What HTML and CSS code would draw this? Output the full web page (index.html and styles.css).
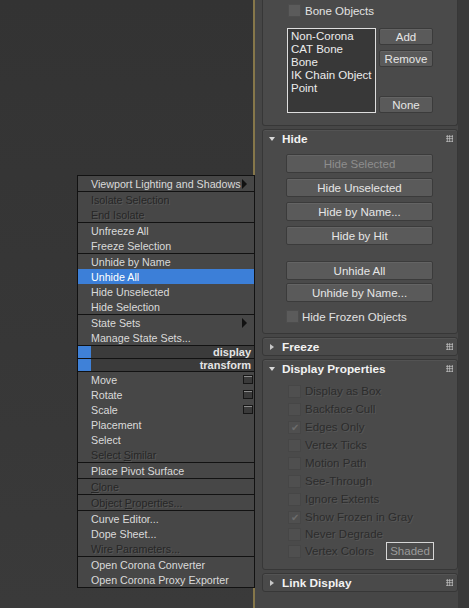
FILE: index.html
```html
<!DOCTYPE html>
<html lang="en">
<head>
  <meta charset="UTF-8">
  <title>Object Properties</title>
  <link rel="stylesheet" href="styles.css">
</head>
<body>
<div class="screen">
  <div class="viewport"></div>
  <div class="frame-line"></div>

  <div class="panel">
    <div class="rollouts">
      <!-- bone filter rollout, header is scrolled off the top -->
      <div class="rollout cut">
        <div class="check-row bone-row">
          <span class="box on"></span><span class="label">Bone Objects</span>
        </div>
        <div class="pick-area">
          <div class="listbox">
            <div>Non-Corona</div>
            <div>CAT Bone</div>
            <div>Bone</div>
            <div>IK Chain Object</div>
            <div>Point</div>
          </div>
          <div class="btn-col">
            <div class="btn small">Add</div>
            <div class="btn small gap5">Remove</div>
            <div class="btn small push">None</div>
          </div>
        </div>
      </div>

      <div class="rollout hide-roll">
        <div class="roll-head"><span class="tri down"></span><span class="title">Hide</span><span class="grip"></span></div>
        <div class="hide-body">
          <div class="btn wide disabled">Hide Selected</div>
          <div class="btn wide gap5">Hide Unselected</div>
          <div class="btn wide gap5">Hide by Name...</div>
          <div class="btn wide gap5">Hide by Hit</div>
          <div class="btn wide gap16">Unhide All</div>
          <div class="btn wide gap3">Unhide by Name...</div>
          <div class="check-row frozen-row">
            <span class="box on"></span><span class="label">Hide Frozen Objects</span>
          </div>
        </div>
      </div>

      <div class="rollout closed">
        <div class="roll-head"><span class="tri right"></span><span class="title">Freeze</span><span class="grip"></span></div>
      </div>

      <div class="rollout display-roll">
        <div class="roll-head"><span class="tri down"></span><span class="title">Display Properties</span><span class="grip"></span></div>
        <div class="display-body">
          <div class="check-row dim"><span class="box"></span><span class="label">Display as Box</span></div>
          <div class="check-row dim"><span class="box"></span><span class="label">Backface Cull</span></div>
          <div class="check-row dim"><span class="box ticked">&#10004;</span><span class="label">Edges Only</span></div>
          <div class="check-row dim"><span class="box"></span><span class="label">Vertex Ticks</span></div>
          <div class="check-row dim"><span class="box"></span><span class="label">Motion Path</span></div>
          <div class="check-row dim"><span class="box"></span><span class="label">See-Through</span></div>
          <div class="check-row dim"><span class="box"></span><span class="label">Ignore Extents</span></div>
          <div class="check-row dim"><span class="box ticked">&#10004;</span><span class="label">Show Frozen in Gray</span></div>
          <div class="check-row dim tight"><span class="box"></span><span class="label">Never Degrade</span></div>
          <div class="check-row dim"><span class="box"></span><span class="label">Vertex Colors</span><span class="shaded">Shaded</span></div>
        </div>
      </div>

      <div class="rollout closed">
        <div class="roll-head"><span class="tri right"></span><span class="title">Link Display</span><span class="grip"></span></div>
      </div>
    </div>
    <div class="scroll-strip"></div>
  </div>

  <!-- quad menu -->
  <div class="ctx-menu">
    <div class="group">
      <div class="item"><span class="sub"></span>Viewport Lighting and Shadows</div>
    </div>
    <div class="group">
      <div class="item off">Isolate Selection</div>
      <div class="item off">End Isolate</div>
    </div>
    <div class="group">
      <div class="item">Unfreeze All</div>
      <div class="item">Freeze Selection</div>
    </div>
    <div class="group">
      <div class="item">Unhide by Name</div>
      <div class="item active">Unhide All</div>
      <div class="item">Hide Unselected</div>
      <div class="item">Hide Selection</div>
    </div>
    <div class="group">
      <div class="item"><span class="sub"></span>State Sets</div>
      <div class="item">Manage State Sets...</div>
    </div>
    <div class="group quad-bar"><span class="quad-mark"></span><span class="quad-name">display</span></div>
    <div class="group quad-bar"><span class="quad-mark"></span><span class="quad-name">transform</span></div>
    <div class="group">
      <div class="item"><span class="opt"></span>Move</div>
      <div class="item"><span class="opt"></span>Rotate</div>
      <div class="item"><span class="opt"></span>Scale</div>
      <div class="item">Placement</div>
      <div class="item">Select</div>
      <div class="item off">Select <u>S</u>imilar</div>
    </div>
    <div class="group">
      <div class="item">Place Pivot Surface</div>
    </div>
    <div class="group">
      <div class="item off"><u>C</u>lone</div>
    </div>
    <div class="group">
      <div class="item off">Object <u>P</u>roperties...</div>
    </div>
    <div class="group">
      <div class="item">Curve Editor...</div>
      <div class="item">Dope Sheet...</div>
      <div class="item off">Wire Parameters...</div>
    </div>
    <div class="group">
      <div class="item">Open Corona Converter</div>
      <div class="item">Open Corona Proxy Exporter</div>
    </div>
  </div>
</div>
</body>
</html>
```

FILE: styles.css
```css
* {
  box-sizing: border-box;
}
body {
  margin: 0;
  background: #343434;
  font-family: "Liberation Sans", Arial, sans-serif;
  font-size: 11px;
  color: #e2e2e2;
}
.screen {
  position: relative;
  display: flex;
  width: 469px;
  height: 608px;
  overflow: hidden;
}
.viewport {
  width: 253px;
  background: linear-gradient(#333333, #3a3a3a);
}
.frame-line {
  width: 2px;
  background: #86774a;
}

/* command panel */
.panel {
  width: 214px;
  display: flex;
  background: #464646;
}
.rollouts {
  width: 196px;
  margin-left: 7px;
  display: flex;
  flex-direction: column;
  gap: 3px;
}
.rollout {
  background: #4a4a4a;
  border: 1px solid #373737;
  border-radius: 3px;
  box-shadow: inset 0 1px 0 #535353;
}
.rollout.cut {
  height: 126px;
  border-top: 0;
  border-radius: 0 0 3px 3px;
  box-shadow: none;
  padding: 4px 0 0 24px;
}
.hide-roll { height: 205px; }
.display-roll { height: 211px; }
.rollout.closed { height: 19px; }
.scroll-strip {
  width: 11px;
  background: #3a3a3a;
}

.roll-head {
  height: 18px;
  display: flex;
  align-items: center;
  padding-left: 6px;
}
.roll-head .title {
  font-weight: bold;
  font-size: 11.8px;
  color: #f2f2f2;
  margin-left: 7px;
}
.tri {
  width: 0;
  height: 0;
}
.tri.down {
  border-left: 3px solid transparent;
  border-right: 3px solid transparent;
  border-top: 4px solid #d8d8d8;
}
.tri.right {
  margin-left: 1px;
  margin-right: 1px;
  border-top: 3px solid transparent;
  border-bottom: 3px solid transparent;
  border-left: 4px solid #c8c8c8;
}
.grip {
  margin-left: auto;
  margin-right: 4px;
  align-self: flex-start;
  margin-top: 5px;
  width: 7px;
  height: 7px;
  background-image: radial-gradient(circle, #c4c4c4 0.8px, transparent 1px);
  background-size: 2.5px 2.5px;
}

/* buttons */
.btn {
  height: 19px;
  display: flex;
  align-items: center;
  justify-content: center;
  background: #5a5a5a;
  border: 1px solid #3b3b3b;
  border-radius: 2px;
  box-shadow: inset 0 1px 0 #646464;
  color: #e6e6e6;
  font-size: 11.5px;
}
.btn.small {
  height: 17px;
}
.btn.wide {
  width: 147px;
}
.btn.disabled {
  color: #8e8e8e;
}
.gap3 { margin-top: 3px; }
.gap5 { margin-top: 5px; }
.gap16 { margin-top: 16px; }
.push { margin-top: auto; }

/* checkboxes */
.check-row {
  display: flex;
  align-items: center;
  height: 18px;
}
.box {
  width: 13px;
  height: 13px;
  flex: none;
  background: #4f4f4f;
  border: 1px solid #464646;
  color: #6c6c6c;
  font-size: 10px;
  line-height: 11px;
  text-align: center;
}
.box.on {
  background: #5b5b5b;
  border-color: #4d4d4d;
}
.label {
  margin-left: 4px;
  font-size: 11.5px;
}
.check-row.dim .label {
  color: #2c2c2c;
  text-shadow: 1px 1px 0 #575757;
}
.tight { height: 16px; }

/* top rollout */
.bone-row {
  height: 13px;
  padding-left: 1px;
}
.pick-area {
  display: flex;
  gap: 3px;
  margin-top: 11px;
  height: 85px;
}
.listbox {
  width: 89px;
  border: 1px solid #dedede;
  background: #383838;
  padding: 1px 3px;
  line-height: 13px;
  font-size: 11.5px;
  color: #ececec;
  white-space: nowrap;
}
.btn-col {
  width: 54px;
  display: flex;
  flex-direction: column;
}

/* hide rollout */
.hide-body {
  padding: 6px 0 0 23px;
}
.frozen-row {
  margin-top: 8px;
  height: 13px;
}
.frozen-row .label {
  margin-left: 3px;
}

/* display rollout */
.display-body {
  padding: 4px 23px 0 25px;
}
.shaded {
  margin-left: auto;
  width: 48px;
  height: 18px;
  border: 1px solid #d6d6d6;
  background: #4b4b4b;
  color: #9a9a9a;
  font-size: 11.5px;
  display: flex;
  align-items: center;
  justify-content: center;
}

/* quad menu */
.ctx-menu {
  position: absolute;
  left: 77px;
  top: 175px;
  width: 178px;
  background: #474747;
  border: 1px solid #121212;
}
.group + .group {
  border-top: 1px solid #121212;
}
.item {
  height: 15px;
  line-height: 16px;
  padding: 0 1px 0 13px;
  color: #dadada;
  font-size: 10.7px;
  white-space: nowrap;
}
.item.active {
  background: #3c7fd8;
  color: #ffffff;
}
.item.off {
  color: #262626;
  text-shadow: 1px 1px 0 #585858;
}
.sub {
  float: right;
  margin: 3px 6px 0 0;
  width: 0;
  height: 0;
  border-top: 5px solid transparent;
  border-bottom: 5px solid transparent;
  border-left: 5px solid #111;
}
.opt {
  float: right;
  margin-top: 3px;
  width: 10px;
  height: 9px;
  background: #3a3a3a;
  border: 1px solid #161616;
  box-shadow: inset 0 1px 0 #8a8a8a;
}
.quad-bar {
  height: 13px;
  display: flex;
  background: #3b3b3b;
}
.quad-mark {
  width: 13px;
  background: #3f81d8;
}
.quad-name {
  margin-left: auto;
  padding-right: 3px;
  font-weight: bold;
  font-size: 11px;
  line-height: 13px;
  color: #e4e4e4;
}
```
